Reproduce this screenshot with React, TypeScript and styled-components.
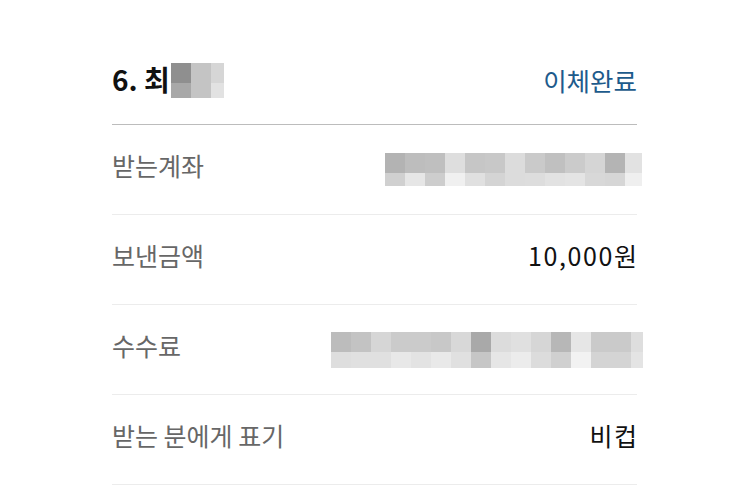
import React from "react";
import styled, { createGlobalStyle } from "styled-components";

const Global = createGlobalStyle`
  html, body { margin: 0; padding: 0; background: #fff; }
  body { font-family: "Noto Sans CJK KR", "Noto Sans", sans-serif; }
`;

const Page = styled.div`
  width: 750px;
  height: 487px;
  box-sizing: border-box;
  padding: 36px 113px 0 112px;
  overflow: hidden;
`;

const Header = styled.div`
  height: 88px;
  display: flex;
  align-items: center;
  justify-content: space-between;
  border-bottom: 1px solid #bcbcbc;
`;

const Title = styled.div`
  display: flex;
  align-items: center;
  font-size: 28px;
  font-weight: 700;
  color: #111;
`;

const TitleText = styled.span`
  margin-top: -2px;
  margin-right: 1px;
`;

const Status = styled.div`
  font-size: 25.5px;
  color: #1d5b8c;
  margin-top: -1px;
`;

const Row = styled.div`
  height: 89px;
  display: flex;
  align-items: center;
  justify-content: space-between;
  border-bottom: 1px solid #ececec;
`;

const Label = styled.div`
  font-size: 25px;
  color: #676767;
  margin-top: -10px;
`;

const Value = styled.div`
  font-size: 25px;
  color: #111;
  letter-spacing: 1.6px;
  margin-right: -1.6px;
  margin-top: -10px;
`;

const Mosaic = styled.div<{ $cols: string; $rows: string; $shift?: number }>`
  display: grid;
  grid-template-columns: ${(p) => p.$cols};
  grid-template-rows: ${(p) => p.$rows};
  margin-right: ${(p) => p.$shift ?? 0}px;
`;

const Cell = styled.div<{ $c: string }>`
  background: ${(p) => p.$c};
`;

const renderCells = (rows: string[][]) =>
  rows.flat().map((c, i) => <Cell key={i} $c={c} />);

const headerCells = [
  ["#8f8f8f", "#c4c4c4", "#d6d6d6"],
  ["#a8a8a8", "#c4c4c4", "#e2e2e2"],
];

const accountCells = [
  ["#b3b3b3", "#bdbdbd", "#bfbfbf", "#dedede", "#c6c6c6", "#c8c8c8", "#dcdcdc", "#cacaca", "#c0c0c0", "#cbcbcb", "#d5d5d5", "#b4b4b4", "#e2e2e2"],
  ["#d0d0d0", "#e6e6e6", "#cdcdcd", "#f0f0f0", "#e0e0e0", "#d4d4d4", "#dcdcdc", "#dddddd", "#e2e2e2", "#e4e4e4", "#d8d8d8", "#d6d6d6", "#efefef"],
];

const feeCells = [
  ["#bcbcbc", "#c3c3c3", "#d6d6d6", "#cbcbcb", "#cbcbcb", "#c8c8c8", "#d8d8d8", "#a9a9a9", "#dcdcdc", "#e0e0e0", "#d6d6d6", "#b7b7b7", "#e6e6e6", "#cacaca", "#cacaca", "#dedede"],
  ["#dedede", "#e0e0e0", "#e0e0e0", "#e8e8e8", "#e3e3e3", "#e9e9e9", "#e0e0e0", "#c6c6c6", "#e6e6e6", "#ececec", "#dcdcdc", "#d0d0d0", "#f2f2f2", "#d4d4d4", "#d4d4d4", "#e4e4e4"],
];

export default function App() {
  return (
    <>
      <Global />
      <Page>
        <Header>
          <Title>
            <TitleText>6. 최</TitleText>
            <Mosaic $cols="20px 20px 13px" $rows="20px 15px">
              {renderCells(headerCells)}
            </Mosaic>
          </Title>
          <Status>이체완료</Status>
        </Header>
        <Row>
          <Label>받는계좌</Label>
          <Mosaic $cols="repeat(12, 20px) 17px" $rows="20px 13px" $shift={-5}>
            {renderCells(accountCells)}
          </Mosaic>
        </Row>
        <Row>
          <Label>보낸금액</Label>
          <Value>10,000원</Value>
        </Row>
        <Row>
          <Label>수수료</Label>
          <Mosaic $cols="repeat(15, 20px) 12px" $rows="20px 16px" $shift={-6}>
            {renderCells(feeCells)}
          </Mosaic>
        </Row>
        <Row>
          <Label>받는 분에게 표기</Label>
          <Value>비컵</Value>
        </Row>
      </Page>
    </>
  );
}
